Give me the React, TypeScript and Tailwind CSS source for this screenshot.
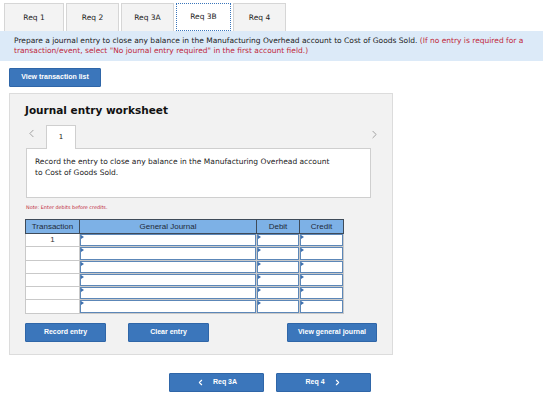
import { ChevronLeft, ChevronRight } from "lucide-react";

const tabs = [
  { label: "Req 1", w: "w-[60px]" },
  { label: "Req 2", w: "w-[53px]" },
  { label: "Req 3A", w: "w-[53px]" },
  { label: "Req 3B", w: "w-[55px]", active: true },
  { label: "Req 4", w: "w-[53px]" },
];

const verdana = "font-['DejaVu_Sans',Verdana,sans-serif]";
const arial = "font-['Liberation_Sans',Arial,sans-serif]";

function InputCell({ w }: { w: string }) {
  return (
    <td className={`${w} h-[13px] p-0 border border-[#c9c9c9]`}>
      <div className="relative h-full border-[1.5px] border-[#5c87b8] bg-white">
        <span className="absolute left-0 top-0 h-0 w-0 border-y-[2px] border-l-[3px] border-y-transparent border-l-[#3d6fae]" />
      </div>
    </td>
  );
}

function BlueButton({ children, w }: { children: React.ReactNode; w: string }) {
  return (
    <button
      className={`${w} ${arial} flex h-[19px] items-center justify-center rounded-[1px] border border-[#2f66a8] bg-[#3b76bb] text-[7px] font-bold text-white`}
    >
      {children}
    </button>
  );
}

export default function App() {
  return (
    <div className="h-[401px] w-[560px] overflow-hidden bg-white">
      {/* requirement tabs */}
      <div className="flex gap-[2px] pl-[4px] pt-[3px]">
        {tabs.map((t) =>
          t.active ? (
            <div
              key={t.label}
              className={`${t.w} ${verdana} flex h-[28px] items-center justify-center border border-dotted border-[#3b76bb] bg-white text-[7.5px] text-[#222]`}
            >
              {t.label}
            </div>
          ) : (
            <div
              key={t.label}
              className={`${t.w} ${verdana} flex h-[28px] items-center justify-center border border-b-0 border-[#d6d6d6] bg-[#f3f3f3] text-[7.5px] text-[#222]`}
            >
              {t.label}
            </div>
          )
        )}
      </div>

      {/* instruction band */}
      <div className={`${verdana} h-[30px] w-[543px] bg-[#dceaf8] pl-[14px] pr-[8px] pt-[5px] text-[7.5px] leading-[10px] text-[#222]`}>
        Prepare a journal entry to close any balance in the Manufacturing Overhead account to Cost of Goods Sold.{" "}
        <span className="text-[#c0283a]">
          (If no entry is required for a transaction/event, select "No journal entry required" in the first account field.)
        </span>
      </div>

      <div className="ml-[9px] mt-[7px]">
        <BlueButton w="w-[92px]">View transaction list</BlueButton>
      </div>

      {/* worksheet panel */}
      <div className="ml-[9px] mt-[6px] h-[262px] w-[384px] border border-[#dcdcdc] bg-[#f2f2f2] pl-[15px] pt-[10px]">
        <h2 className={`${verdana} text-[10.5px] font-bold leading-[13px] text-[#111]`}>Journal entry worksheet</h2>

        <div className="mt-[8px] flex h-[23px] items-end">
          <ChevronLeft className="mb-[8px] ml-[0px] h-[13px] w-[13px] text-[#8f8f8f]" strokeWidth={1.5} />
          <div className={`${verdana} relative z-10 -mb-px ml-[8px] flex h-[24px] w-[30px] items-start justify-center border border-b-0 border-[#cfcfcf] bg-white pt-[6px] text-[7px] text-[#222]`}>
            1
          </div>
          <ChevronRight className="mb-[7px] ml-auto mr-[11px] h-[13px] w-[13px] text-[#8f8f8f]" strokeWidth={1.5} />
        </div>

        <div className={`${verdana} ml-[1px] h-[50px] w-[345px] border border-[#cfcfcf] bg-white px-[8px] pt-[7px] text-[7.5px] leading-[11px] text-[#222]`}>
          Record the entry to close any balance in the Manufacturing Overhead account
          <br />
          to Cost of Goods Sold.
        </div>

        <p className={`${verdana} ml-[1px] mt-[5px] text-[4.9px] leading-[8px] text-[#c0283a]`}>Note: Enter debits before credits.</p>

        <table className={`${arial} mt-[8px] border-collapse border border-[#9a9a9a] bg-white text-[8px]`}>
          <thead>
            <tr className="h-[14px] bg-[#7db1e6] text-[#1e2a38]">
              <th className="w-[54px] border border-[#3f4b59] p-0 font-normal">Transaction</th>
              <th className="w-[177px] border border-[#3f4b59] p-0 font-normal">General Journal</th>
              <th className="w-[43px] border border-[#3f4b59] p-0 font-normal">Debit</th>
              <th className="w-[44px] border border-[#3f4b59] p-0 font-normal">Credit</th>
            </tr>
          </thead>
          <tbody>
            {[0, 1, 2, 3, 4, 5].map((i) => (
              <tr key={i} className="h-[13.3px]">
                <td className="w-[54px] border border-[#c9c9c9] p-0 text-center text-[#333]">{i === 0 ? "1" : ""}</td>
                <InputCell w="w-[177px]" />
                <InputCell w="w-[43px]" />
                <InputCell w="w-[44px]" />
              </tr>
            ))}
          </tbody>
        </table>

        <div className="mt-[9px] flex w-[352px] items-center">
          <BlueButton w="w-[81px]">Record entry</BlueButton>
          <div className="ml-[22px]">
            <BlueButton w="w-[81px]">Clear entry</BlueButton>
          </div>
          <div className="ml-auto">
            <BlueButton w="w-[90px]">View general journal</BlueButton>
          </div>
        </div>
      </div>

      {/* bottom navigation */}
      <div className="ml-[169px] mt-[18px] flex gap-[12px]">
        <BlueButton w="w-[95px]">
          <ChevronLeft className="mr-[8px] h-[9px] w-[9px]" strokeWidth={3} />
          Req 3A
        </BlueButton>
        <BlueButton w="w-[95px]">
          Req 4
          <ChevronRight className="ml-[8px] h-[9px] w-[9px]" strokeWidth={3} />
        </BlueButton>
      </div>
    </div>
  );
}
